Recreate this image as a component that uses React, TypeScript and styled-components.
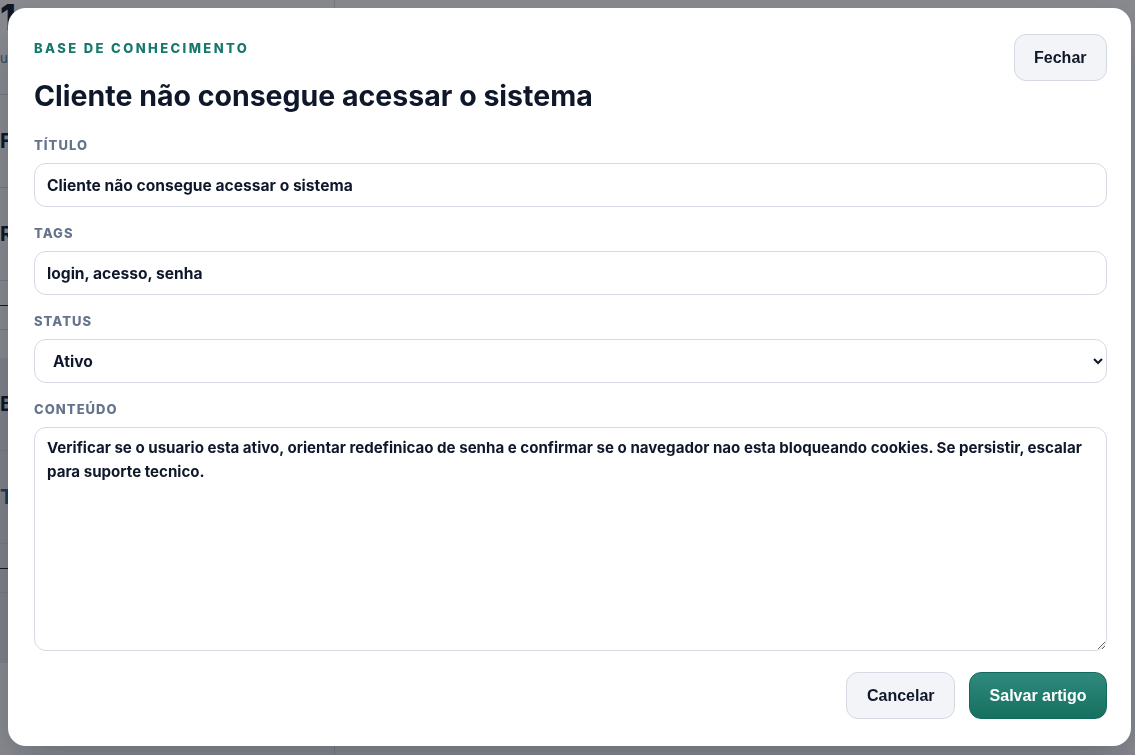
import * as React from "react";
import styled, { createGlobalStyle } from "styled-components";

const GlobalStyle = createGlobalStyle`
  * { box-sizing: border-box; }
  html, body { margin: 0; height: 100%; }
  body {
    font-family: Inter, "Liberation Sans", Arial, sans-serif;
    background: #f7f8fa;
    color: #0f172a;
    overflow: hidden;
  }
`;

function App() {
  return (
    <>
      <GlobalStyle />
      <Page>
        <SideColumn>
          <BigNumber>1</BigNumber>
          <Muted>usuários ativos</Muted>
          <ListRow>Filtros</ListRow>
          <ListRow>Recentes</ListRow>
          <ListRow $small>— sem itens</ListRow>
          <ShadedCard>
            <ListRow>Base de artigos</ListRow>
            <ListRow $accent>Título</ListRow>
            <ListRow $small>— sem itens</ListRow>
          </ShadedCard>
        </SideColumn>
        <MainArea />
      </Page>

      <Overlay>
        <Modal>
          <Header>
            <HeaderText>
              <Eyebrow>Base de conhecimento</Eyebrow>
              <Title>Cliente não consegue acessar o sistema</Title>
            </HeaderText>
            <GhostButton type="button">Fechar</GhostButton>
          </Header>

          <Form>
            <Field>
              <Label>Título</Label>
              <TextInput defaultValue="Cliente não consegue acessar o sistema" />
            </Field>
            <Field>
              <Label>Tags</Label>
              <TextInput defaultValue="login, acesso, senha" />
            </Field>
            <Field>
              <Label>Status</Label>
              <Select defaultValue="ativo">
                <option value="ativo">Ativo</option>
                <option value="inativo">Inativo</option>
              </Select>
            </Field>
            <Field>
              <Label>Conteúdo</Label>
              <TextArea defaultValue="Verificar se o usuario esta ativo, orientar redefinicao de senha e confirmar se o navegador nao esta bloqueando cookies. Se persistir, escalar para suporte tecnico." />
            </Field>
          </Form>

          <Footer>
            <GhostButton type="button">Cancelar</GhostButton>
            <PrimaryButton type="button">Salvar artigo</PrimaryButton>
          </Footer>
        </Modal>
      </Overlay>
    </>
  );
}

export default App;

const Page = styled.div`
  min-height: 100vh;
  display: grid;
  grid-template-columns: 335px 1fr;
`;

const SideColumn = styled.aside`
  border-right: 1px solid #d6d9e0;
  display: flex;
  flex-direction: column;
`;

const MainArea = styled.main`
  background: #f7f8fa;
`;

const BigNumber = styled.div`
  font-size: 36px;
  font-weight: 800;
  line-height: 34px;
  color: #0f172a;
`;

const Muted = styled.div`
  margin-top: 16px;
  font-size: 13px;
  color: #64748b;
  padding-bottom: 28px;
  border-bottom: 1px solid #d6d9e0;
`;

const ListRow = styled.div<{ $small?: boolean; $accent?: boolean }>`
  padding: ${(p) => (p.$small ? "16px 0" : "34px 0")};
  font-size: ${(p) => (p.$small ? "13px" : "20px")};
  font-weight: ${(p) => (p.$small ? 400 : 700)};
  color: ${(p) => (p.$accent ? "#2d5b86" : "#0f172a")};
  border-bottom: 1px solid #d6d9e0;
`;

const ShadedCard = styled.section`
  margin-top: 28px;
  background: #e6e8ed;
  padding-bottom: 70px;
`;

const Overlay = styled.div`
  position: fixed;
  inset: 0;
  background: rgba(20, 22, 30, 0.48);
  display: flex;
  align-items: flex-start;
  padding: 8px 4px 8px 8px;
`;

const Modal = styled.div`
  width: 100%;
  background: #ffffff;
  border-radius: 18px;
  padding: 26px 24px 27px 26px;
  display: flex;
  flex-direction: column;
  box-shadow: 0 20px 50px rgba(15, 23, 42, 0.25);
`;

const Header = styled.header`
  display: flex;
  justify-content: space-between;
  align-items: flex-start;
  margin-bottom: 24px;
`;

const HeaderText = styled.div`
  display: flex;
  flex-direction: column;
  padding-top: 6px;
`;

const Eyebrow = styled.span`
  font-size: 13px;
  line-height: 16px;
  font-weight: 800;
  letter-spacing: 0.185em;
  text-transform: uppercase;
  color: #17796b;
`;

const Title = styled.h1`
  margin: 23px 0 0;
  font-size: 28.5px;
  line-height: 34px;
  font-weight: 700;
  color: #0f172a;
`;

const Form = styled.div`
  display: flex;
  flex-direction: column;
  gap: 18px;
`;

const Field = styled.label`
  display: flex;
  flex-direction: column;
  gap: 10px;
`;

const Label = styled.span`
  font-size: 13px;
  line-height: 16px;
  font-weight: 800;
  letter-spacing: 0.08em;
  text-transform: uppercase;
  color: #64748b;
`;

const controlBase = `
  width: 100%;
  border: 1px solid #d5dae3;
  border-radius: 12px;
  background: #ffffff;
  color: #0f172a;
  font-family: Inter, "Liberation Sans", Arial, sans-serif;
  font-weight: 700;
  outline: none;
`;

const TextInput = styled.input`
  ${controlBase}
  height: 44px;
  padding: 0 12px;
  font-size: 15.6px;
`;

const Select = styled.select`
  ${controlBase}
  height: 44px;
  padding: 0 8px 0 14px;
  font-size: 15.6px;
`;

const TextArea = styled.textarea`
  ${controlBase}
  height: 224px;
  padding: 8px 12px;
  font-size: 15.1px;
  line-height: 24px;
  resize: vertical;
`;

const Footer = styled.footer`
  margin-top: 21px;
  display: flex;
  justify-content: flex-end;
  gap: 14px;
`;

const GhostButton = styled.button`
  height: 47px;
  padding: 0 19.5px;
  border-radius: 12px;
  border: 1px solid #d3d8e3;
  background: #f3f4f8;
  color: #0f172a;
  font-family: "Liberation Sans", Arial, sans-serif;
  font-size: 16px;
  font-weight: 700;
  cursor: pointer;
`;

const PrimaryButton = styled.button`
  height: 47px;
  padding: 0 19.5px;
  border-radius: 12px;
  border: 1px solid #13695d;
  background: linear-gradient(180deg, #2f8a7e 0%, #15705f 100%);
  color: #ffffff;
  font-family: "Liberation Sans", Arial, sans-serif;
  font-size: 16px;
  font-weight: 700;
  cursor: pointer;
`;
